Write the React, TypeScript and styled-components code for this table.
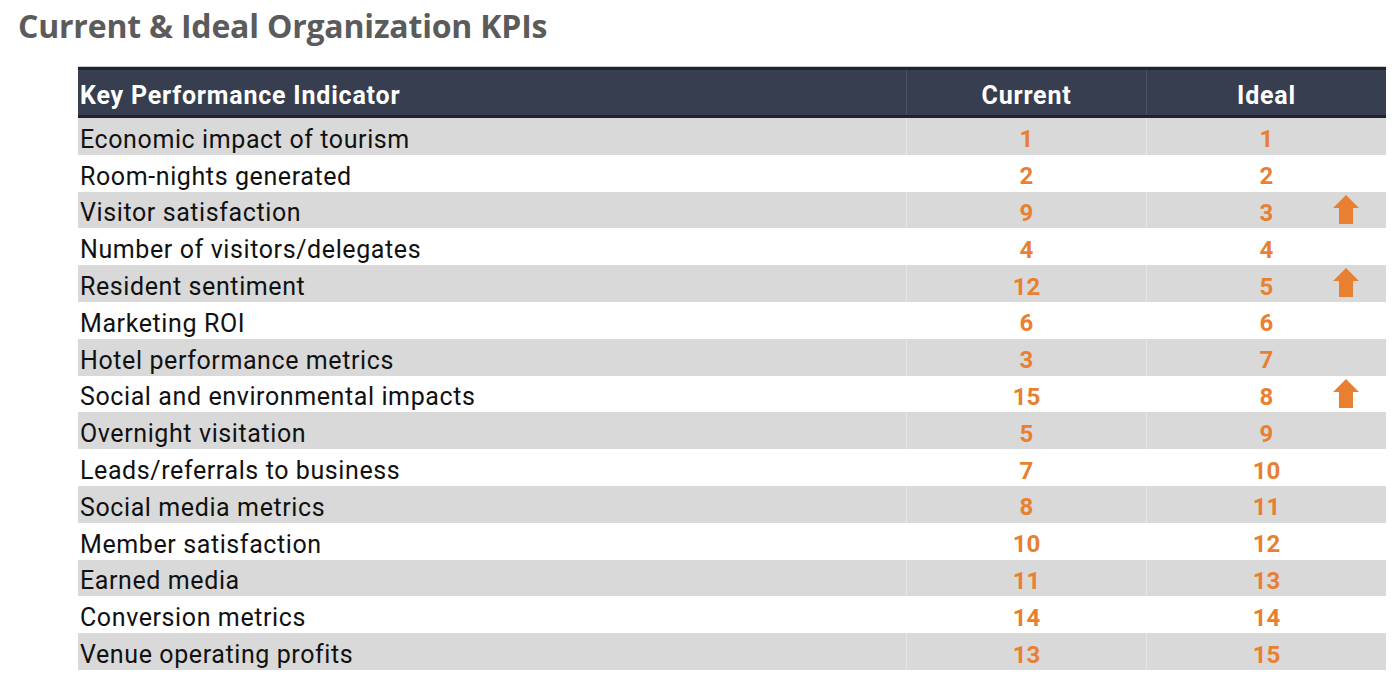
import styled, { createGlobalStyle } from 'styled-components'

type Kpi = { name: string; current: number; ideal: number; up?: boolean }

const kpis: Kpi[] = [
    { name: 'Economic impact of tourism', current: 1, ideal: 1 },
    { name: 'Room-nights generated', current: 2, ideal: 2 },
    { name: 'Visitor satisfaction', current: 9, ideal: 3, up: true },
    { name: 'Number of visitors/delegates', current: 4, ideal: 4 },
    { name: 'Resident sentiment', current: 12, ideal: 5, up: true },
    { name: 'Marketing ROI', current: 6, ideal: 6 },
    { name: 'Hotel performance metrics', current: 3, ideal: 7 },
    { name: 'Social and environmental impacts', current: 15, ideal: 8, up: true },
    { name: 'Overnight visitation', current: 5, ideal: 9 },
    { name: 'Leads/referrals to business', current: 7, ideal: 10 },
    { name: 'Social media metrics', current: 8, ideal: 11 },
    { name: 'Member satisfaction', current: 10, ideal: 12 },
    { name: 'Earned media', current: 11, ideal: 13 },
    { name: 'Conversion metrics', current: 14, ideal: 14 },
    { name: 'Venue operating profits', current: 13, ideal: 15 },
]

const UpArrow = () => (
    <ArrowIcon width="26" height="29" viewBox="0 0 26 29">
        <path d="M13 0 L26 13 L20 13 L20 29 L6 29 L6 13 L0 13 Z" fill="#e97f30" />
    </ArrowIcon>
)

const App = () => (
    <>
        <GlobalStyle />
        <Page>
            <Title>Current &amp; Ideal Organization KPIs</Title>
            <Table>
                <HeaderRow>
                    <HeadCell>Key Performance Indicator</HeadCell>
                    <HeadCell $center>Current</HeadCell>
                    <HeadCell $center>Ideal</HeadCell>
                </HeaderRow>
                {kpis.map((kpi, i) => (
                    <Row key={kpi.name} $shaded={i % 2 === 0}>
                        <LabelCell>{kpi.name}</LabelCell>
                        <NumberCell>{kpi.current}</NumberCell>
                        <NumberCell>
                            {kpi.ideal}
                            {kpi.up && <UpArrow />}
                        </NumberCell>
                    </Row>
                ))}
            </Table>
        </Page>
    </>
)

const GlobalStyle = createGlobalStyle`
    body {
        margin: 0;
        background: #ffffff;
    }
`

const Page = styled.div`
    width: 1400px;
    height: 685px;
    padding: 5px 0 0 18px;
    box-sizing: border-box;
    overflow: hidden;
`

const Title = styled.h1`
    margin: 0 0 20px;
    font-family: 'Open Sans', sans-serif;
    font-weight: 700;
    font-size: 32px;
    line-height: 42px;
    letter-spacing: -0.2px;
    color: #5b5b5b;
`

const Table = styled.div`
    margin-left: 60px;
    width: 1308px;
    display: flex;
    flex-direction: column;
`

const columns = '828px 240px 240px'

const HeaderRow = styled.div`
    display: grid;
    grid-template-columns: ${columns};
    height: 51px;
    box-sizing: border-box;
    background: #363e4f;
    border-top: 3px solid #1f232b;
    border-bottom: 3px solid #1f232b;
    box-shadow: 0 -1px 0 #c9c9c9;
`

const HeadCell = styled.div<{ $center?: boolean }>`
    display: flex;
    align-items: center;
    justify-content: ${(p) => (p.$center ? 'center' : 'flex-start')};
    padding: 6px 0 0 ${(p) => (p.$center ? '0' : '2px')};
    font-family: Roboto, sans-serif;
    font-weight: 700;
    font-size: 25px;
    letter-spacing: 0.8px;
    color: #ffffff;
    & + & {
        border-left: 1px solid #4a5264;
    }
`

const Row = styled.div<{ $shaded: boolean }>`
    display: grid;
    grid-template-columns: ${columns};
    height: 36.8px;
    background: ${(p) => (p.$shaded ? '#d9d9d9' : '#ffffff')};
`

const LabelCell = styled.div`
    display: flex;
    align-items: center;
    padding: 6px 0 0 2px;
    font-family: Roboto, sans-serif;
    font-size: 25px;
    letter-spacing: 0.6px;
    color: #111111;
`

const NumberCell = styled.div`
    position: relative;
    display: flex;
    align-items: center;
    justify-content: center;
    padding-top: 6px;
    font-family: Roboto, sans-serif;
    font-weight: 700;
    font-size: 24px;
    color: #e97f30;
    border-left: 1px solid rgba(255, 255, 255, 0.35);
`

const ArrowIcon = styled.svg`
    position: absolute;
    right: 27px;
    top: 3px;
`

export default App
